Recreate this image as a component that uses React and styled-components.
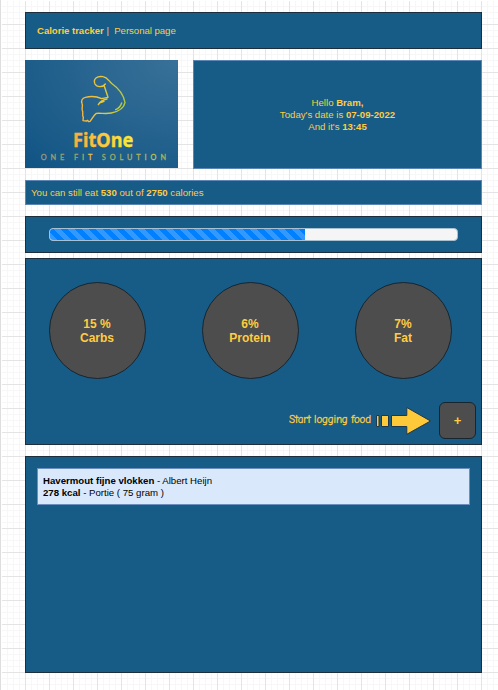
import React from 'react';
import styled, { createGlobalStyle } from 'styled-components';

const GlobalStyle = createGlobalStyle`
  *, *::before, *::after { box-sizing: border-box; }
  body { margin: 0; background: #fff; overflow: hidden; }
`;

const Page = styled.main`
  width: 498px;
  height: 690px;
  padding: 12px 16px 0 25px;
  display: flex;
  flex-direction: column;
  font: 9.65px/12px "Liberation Sans", Arial, sans-serif;
  color: #ffcc42;
  background:
    linear-gradient(#dedede, #dedede) 0 0 / 1px 100% no-repeat,
    linear-gradient(#fff, #fff) 1px 0 / 1px 100% no-repeat,
    linear-gradient(#fff, #fff) 0 0 / 100% 1px no-repeat,
    repeating-linear-gradient(to right, #e4e4e4 0 1px, transparent 1px 24px) 1px 0,
    repeating-linear-gradient(to bottom, #e4e4e4 0 1px, transparent 1px 24px),
    repeating-linear-gradient(to right, #f7f7f7 0 1px, transparent 1px 6px) 1px 0,
    repeating-linear-gradient(to bottom, #f7f7f7 0 1px, transparent 1px 6px),
    #fff;
`;

const Panel = styled.section`
  width: 457px;
  height: ${(p) => p.$height}px;
  margin-bottom: ${(p) => p.$gap ?? 11}px;
  flex: none;
  background: #175b87;
  border: 1px solid ${(p) => (p.$soft ? '#5c86b5' : '#1d2f3c')};
`;

const Header = styled(Panel)`
  display: flex;
  align-items: center;
  padding-left: 11px;
  letter-spacing: -0.04px;
  white-space: pre;
`;

const Intro = styled.div`
  display: flex;
  gap: 15px;
  height: 109px;
  margin-bottom: 11px;
  flex: none;
`;

const Logo = styled.svg`
  width: 153px;
  height: 108px;
  display: block;
  background: radial-gradient(ellipse at 100% 0, #387199 0%, #27648f 45%, #105484 100%);
`;

const Greeting = styled(Panel)`
  width: 289px;
  margin: 0;
  display: flex;
  align-items: center;
  justify-content: center;
  text-align: center;
`;

const CalorieBar = styled(Panel)`
  display: flex;
  align-items: center;
  padding-left: 5px;
  white-space: pre;
`;

const ProgressPanel = styled(Panel)`
  padding: 11px 23px;
`;

const Track = styled.div`
  height: 13px;
  border: 1px solid #a9c0d0;
  border-radius: 4px;
  overflow: hidden;
  background: #f5f5f5;
`;

const Fill = styled.div`
  width: 255px;
  height: 100%;
  background: repeating-linear-gradient(45deg, #3399ff 0 4.95px, #0080ff 4.95px 9.9px);
`;

const Macros = styled.div`
  height: 120px;
  padding: 23px 29px 0 23px;
  display: flex;
  justify-content: space-between;
`;

const Macro = styled.div`
  width: 97px;
  height: 97px;
  padding-right: 1px;
  border: 1px solid #17252f;
  border-radius: 50%;
  background: #4d4d4d;
  display: flex;
  align-items: center;
  justify-content: center;
  text-align: center;
  font-weight: bold;
  font-size: 12px;
  line-height: 14px;
`;

const LogAction = styled.div`
  height: 37px;
  margin-top: 23px;
  padding-right: 5px;
  display: flex;
  align-items: center;
  justify-content: flex-end;
`;

const Hint = styled.span`
  font-family: "Comic Neue", "Comic Sans MS", Lato, sans-serif;
  font-size: 11px;
  letter-spacing: -0.12px;
  -webkit-text-stroke: 0.3px currentColor;
  margin: -2px 4px 0 0;
`;

const Arrow = styled.svg`
  width: 57px;
  height: 30px;
  margin-right: 7px;
  fill: #ffca3a;
  stroke: #20394a;
  stroke-width: 1;
`;

const AddButton = styled.button`
  width: 37px;
  height: 37px;
  padding: 0;
  border: 1px solid #17252f;
  border-radius: 6px;
  background: #4d4d4d;
  color: #ffcc42;
  font: bold 13px/14px "Liberation Sans", Arial, sans-serif;
`;

const FoodLog = styled(Panel)`
  padding: 11px;
`;

const Entry = styled.article`
  height: 37px;
  padding: 6px 5px 0;
  border: 1px solid #6c8ebf;
  background: #dae8fc;
  color: #000;
  white-space: pre;
`;

const macros = [
  { share: '15 %', name: 'Carbs' },
  { share: '6%', name: 'Protein' },
  { share: '7%', name: 'Fat' },
];

function FitOneLogo() {
  return (
    <Logo viewBox="15 15 459 324" role="img" aria-label="FitOne">
      <defs>
        <linearGradient id="arm" gradientUnits="userSpaceOnUse" x1="182" x2="316" y1="0" y2="0">
          <stop stopColor="#f9b33d" />
          <stop offset=".5" stopColor="#e8c83b" />
          <stop offset="1" stopColor="#adc83e" />
        </linearGradient>
        <linearGradient id="name" gradientUnits="userSpaceOnUse" x1="160" x2="340" y1="0" y2="0">
          <stop stopColor="#faab3d" />
          <stop offset=".5" stopColor="#fcc93a" />
          <stop offset="1" stopColor="#f7ed35" />
        </linearGradient>
        <linearGradient id="tag" gradientUnits="userSpaceOnUse" x1="62" x2="440" y1="0" y2="0">
          <stop stopColor="#989c75" />
          <stop offset=".32" stopColor="#a9a265" />
          <stop offset=".39" stopColor="#efc13b" />
          <stop offset=".45" stopColor="#a3a865" />
          <stop offset=".8" stopColor="#aeb25a" />
          <stop offset=".9" stopColor="#c6cb45" />
          <stop offset="1" stopColor="#9fab62" />
        </linearGradient>
      </defs>
      <g fill="none" stroke="url(#arm)" strokeWidth="4.2" strokeLinecap="round" strokeLinejoin="round">
        <path d="M256 87C249 97 231 98 225 87C218 71 232 62 249 65C263 67 266 78 277 87C296 100 311 122 315 142C312 158 295 170 274 174C259 177 244 174 229 175C221 180 217 190 210 199L206 200L203 196L199 198L189 197L190 187C185 179 191 174 187 166C184 159 190 153 186 145C183 138 186 129 196 127C212 123 230 124 245 131L264 127L252 91" />
        <path d="M235 149C240 139 248 135 261 132M242 143L252 139M287 164C297 160 302 153 305 144" />
      </g>
      <text x="159" y="275" fill="url(#name)" stroke="url(#name)" strokeWidth="1" fontFamily="Noto Sans, sans-serif" fontWeight="700" fontSize="60" textLength="181" lengthAdjust="spacingAndGlyphs">FitOne</text>
      <text x="62" y="314" fill="url(#tag)" stroke="url(#tag)" strokeWidth=".8" fontFamily="Lato, sans-serif" fontSize="22" textLength="376">ONE FIT SOLUTION</text>
    </Logo>
  );
}

export default function App() {
  return (
    <>
      <GlobalStyle />
      <Page>
        <Header as="header" $height={37}>
          <b>Calorie tracker</b>{' |  Personal page'}
        </Header>
        <Intro>
          <FitOneLogo />
          <Greeting $height={109} $soft>
            <div>
              Hello <b>Bram,</b><br />
              Today's date is <b>07-09-2022</b><br />
              And it's <b>13:45</b>
            </div>
          </Greeting>
        </Intro>
        <CalorieBar $height={25} $soft>
          {'You can still eat '}<b>530</b>{' out of '}<b>2750</b>{' calories'}
        </CalorieBar>
        <ProgressPanel $height={37} $gap={5}>
          <Track><Fill /></Track>
        </ProgressPanel>
        <Panel $height={187}>
          <Macros>
            {macros.map(({ share, name }) => (
              <Macro key={name}><div>{share}<br />{name}</div></Macro>
            ))}
          </Macros>
          <LogAction>
            <Hint>Start logging food</Hint>
            <Arrow viewBox="375 406 57 30">
              <path d="M376.5 415.5h2.5v11h-2.5zM381.5 415.5h7v11h-7zM391.5 415.5h15.3v-8L430.5 421L406.8 434.3v-7.8h-15.3z" />
            </Arrow>
            <AddButton aria-label="Log food">+</AddButton>
          </LogAction>
        </Panel>
        <FoodLog $height={217} $gap={0}>
          <Entry>
            <b>Havermout fijne vlokken</b> - Albert Heijn<br />
            <b>278 kcal</b> - Portie ( 75 gram )
          </Entry>
        </FoodLog>
      </Page>
    </>
  );
}
